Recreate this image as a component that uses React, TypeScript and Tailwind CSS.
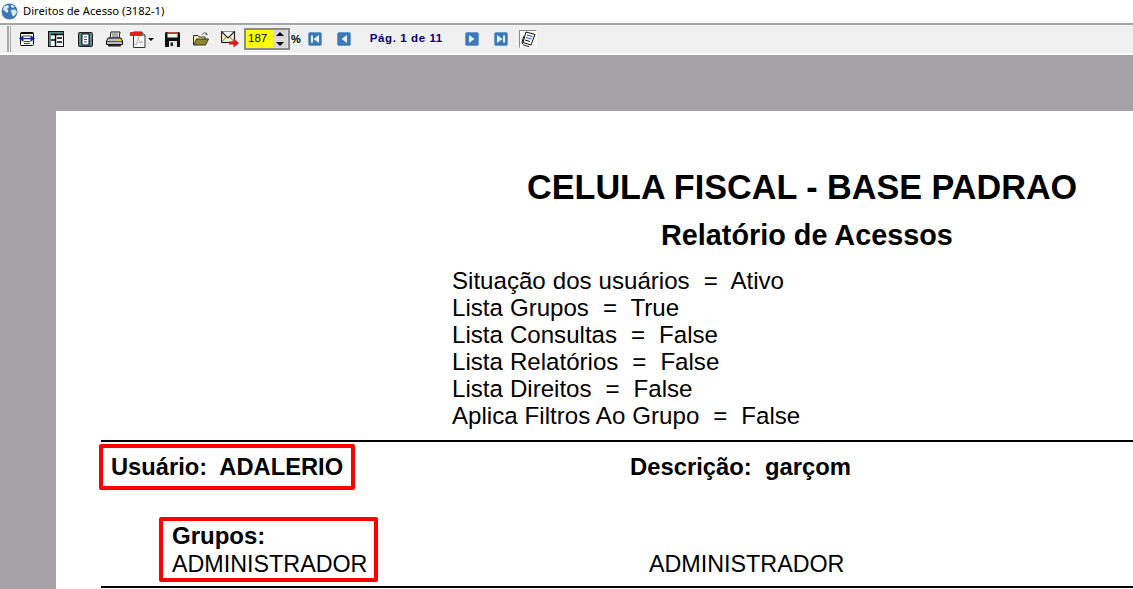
const font = { fontFamily: '"Liberation Sans", Arial, sans-serif' };

function Globe() {
  return (
    <svg width="17" height="17" viewBox="0 0 17 17">
      <circle cx="8.5" cy="8.5" r="8" fill="#3d76b3" />
      <path d="M3 3.5 L7 2 L8 4 L6 6 L7.5 8 L6 10 L4 8 L2 7 Z" fill="#dfe9f3" />
      <path d="M10 1.5 L14 3.5 L12 5 L10 4 Z M9.5 7 L14 6.5 L16 9 L13 13.5 L11 12 L10.5 9.5 Z" fill="#dfe9f3" />
    </svg>
  );
}

function Nav({ kind }: { kind: "first" | "prev" | "next" | "last" }) {
  const flip = kind === "next" || kind === "last";
  const bar = kind === "first" || kind === "last";
  return (
    <svg width="14" height="14" viewBox="0 0 14 14">
      <rect x="0.5" y="0.5" width="13" height="13" rx="1.5" fill="#3b78b5" stroke="#6b9ccb" />
      <g transform={flip ? "translate(14 0) scale(-1 1)" : undefined} fill="#eaf2fa">
        {bar && <rect x="3" y="3.5" width="2" height="7" />}
        {bar ? <path d="M11 3 V11 L5.5 7 Z" /> : <path d="M10 3 V11 L4.5 7 Z" />}
      </g>
    </svg>
  );
}

function FitWidth() {
  return (
    <svg width="16" height="14" viewBox="0 0 16 14">
      <rect x="1.5" y="0.5" width="13" height="13" rx="1" fill="#fff" stroke="#000" />
      <rect x="2" y="0.5" width="12" height="1.5" fill="#000" />
      <path d="M5 4 H11 M5 9.5 H11 M5 11.5 H11" stroke="#444" strokeWidth="1" />
      <path d="M0 6.5 L4.5 3 V10 Z M16 6.5 L11.5 3 V10 Z" fill="#0a2a9c" />
      <rect x="3" y="6" width="10" height="1.2" fill="#0a2a9c" />
    </svg>
  );
}

function TwoPage() {
  return (
    <svg width="16" height="16" viewBox="0 0 16 16">
      <rect x="0" y="0" width="16" height="16" fill="#111" />
      <rect x="1" y="1" width="14" height="14" fill="#4f8c8c" />
      <rect x="3" y="3" width="12" height="12" fill="#fff" />
      <path d="M3 3.5 H15 M7.5 3 V15" stroke="#000" strokeWidth="1.5" fill="none" />
      <path d="M9 7 H14 M9 11 H14 M3 9 H7" stroke="#000" strokeWidth="1.4" />
    </svg>
  );
}

function OnePage() {
  return (
    <svg width="15" height="15" viewBox="0 0 15 15">
      <rect x="0" y="0" width="15" height="15" rx="2" fill="#222" />
      <rect x="1" y="1" width="13" height="13" rx="1" fill="#4f8c8c" />
      <rect x="4" y="2" width="7" height="11" fill="#fff" stroke="#000" />
      <path d="M6 5 H9 M6 7.5 H9 M6 10 H9" stroke="#2a5aa8" />
    </svg>
  );
}

function Printer() {
  return (
    <svg width="17" height="16" viewBox="0 0 17 16">
      <path d="M5 1 H14 L13 7 H4 Z" fill="#fff" stroke="#111" />
      <path d="M6 3 H12 M6 5 H12" stroke="#555" />
      <path d="M2 7 H15 L16.5 10 V13.5 H0.5 V10 Z" fill="#bdbdbd" stroke="#111" />
      <rect x="1" y="10" width="15" height="1" fill="#555" />
      <rect x="11" y="8.5" width="4" height="1.5" fill="#e8d800" />
      <rect x="2" y="13.5" width="13" height="2" rx="0.5" fill="#222" />
    </svg>
  );
}

function Pdf() {
  return (
    <svg width="16" height="17" viewBox="0 0 16 17">
      <path d="M3.5 1 H12 L15 4 V16.5 H3.5 Z" fill="#fff" stroke="#333" />
      <path d="M12 1 V4 H15" fill="#ddd" stroke="#333" />
      <rect x="0" y="1" width="12" height="4" fill="#e2231a" />
      <path d="M5 14.5 C7 11 9 6 8.5 5.5 C8 5 8 8 9.5 10 C10.5 11.5 13.5 11.5 13 11 C12.5 10.5 8 11 5 14.5 Z" fill="none" stroke="#b9b0b0" />
    </svg>
  );
}

function Floppy() {
  return (
    <svg width="15" height="15" viewBox="0 0 15 15">
      <path d="M1 0 H14 L15 1 V15 H0 V1 Z" fill="#111" />
      <rect x="2.5" y="0.5" width="10" height="5" fill="#f4f4f4" />
      <rect x="2.5" y="0.5" width="10" height="1.5" fill="#e2231a" />
      <rect x="4" y="9" width="8" height="6" fill="#e4e4e4" />
      <rect x="5.5" y="10.5" width="2.5" height="3.5" fill="#222" />
    </svg>
  );
}

function Folder() {
  return (
    <svg width="16" height="14" viewBox="0 0 16 14">
      <path d="M9 3 C10 0.5 12 0.5 14 2" fill="none" stroke="#555" strokeWidth="1" />
      <path d="M13 0.5 L15 2.5 L12.5 3 Z" fill="#555" />
      <path d="M0.5 13 V3.5 H5 L6 5 H12 V7" fill="#f7ee9a" stroke="#333" />
      <path d="M0.5 13 L3.5 7 H15.5 L12.5 13 Z" fill="#8c8a28" stroke="#333" />
    </svg>
  );
}

function Mail() {
  return (
    <svg width="18" height="17" viewBox="0 0 18 17">
      <rect x="0.5" y="0.5" width="13" height="11" fill="#fbf3c4" stroke="#222" strokeWidth="1.2" />
      <path d="M0.5 0.5 L7 7 L13.5 0.5" fill="#fff" stroke="#222" strokeWidth="1.2" />
      <path d="M0.5 11.5 L5 6 M13.5 11.5 L9 6" stroke="#777" />
      <path d="M8 10.5 H12.5 V7.5 L18 12 L12.5 16.5 V13.5 H8 Z" fill="#e2161a" />
    </svg>
  );
}

function Notes() {
  return (
    <svg width="18" height="18" viewBox="0 0 18 18">
      <rect x="0" y="0" width="18" height="18" fill="#fbfbfb" />
      <path d="M0.5 17.5 V0.5 H17.5" fill="none" stroke="#8a8a8a" />
      <path d="M7 2 L16 4.5 L12 15 L4 12.5 Z" fill="#fff" stroke="#111" />
      <path d="M8 5 L13.5 6.5 M7 7.5 L12.5 9" stroke="#2a4fc0" />
      <path d="M5 6 L3 12 C3 15 7 16 10 16.5" fill="none" stroke="#111" />
      <path d="M6 10 L11 11.5" stroke="#111" />
    </svg>
  );
}

function Btn({ w, children }: { w: string; children: React.ReactNode }) {
  return <div className={`flex items-center justify-center ${w}`}>{children}</div>;
}

function Toolbar() {
  return (
    <div className="flex h-[32px] items-center border-t-2 border-b-2 border-t-[#a5a5a5] border-b-[#ffffff] bg-[#f0f0f0] pl-[7px] text-black">
      <div className="mr-[8px] flex h-[26px] w-[4px] justify-between">
        <div className="w-[1.5px] bg-[#a9a9a9]" />
        <div className="w-[1.5px] bg-[#a9a9a9]" />
      </div>
      <div className="flex items-center">
        <Btn w="w-[16px]"><FitWidth /></Btn>
        <Btn w="w-[16px] ml-[13px]"><TwoPage /></Btn>
        <Btn w="w-[15px] ml-[14px]"><OnePage /></Btn>
        <Btn w="w-[17px] ml-[13px]"><Printer /></Btn>
        <Btn w="w-[16px] ml-[7px]"><Pdf /></Btn>
        <div className="mr-[11px] ml-[2px] h-0 w-0 border-x-[3px] border-t-[3px] border-x-transparent border-t-black" />
        <Btn w="w-[15px]"><Floppy /></Btn>
        <Btn w="w-[16px] ml-[13px]"><Folder /></Btn>
        <Btn w="w-[18px] ml-[12px]"><Mail /></Btn>
      </div>
      <div className="ml-[5px] flex h-[22px] w-[46px] items-center justify-between border-2 border-[#8a8a8a] bg-[#ffff00] pr-[1px] pl-[2px]">
        <span className="text-[11.5px] leading-none" style={font}>187</span>
        <div className="flex h-[18px] w-[14px] flex-col gap-px">
          <div className="flex flex-1 items-center justify-center bg-[#d8d8d8]"><div className="h-0 w-0 border-x-[4px] border-b-[4px] border-x-transparent border-b-black" /></div>
          <div className="flex flex-1 items-center justify-center bg-[#d8d8d8]"><div className="h-0 w-0 border-x-[4px] border-t-[4px] border-x-transparent border-t-black" /></div>
        </div>
      </div>
      <span className="ml-[1px] text-[11px] font-bold leading-none" style={font}>%</span>
      <div className="ml-[7px] flex items-center">
        <Nav kind="first" />
        <div className="ml-[15px]"><Nav kind="prev" /></div>
      </div>
      <span className="ml-[19px] w-[73px] text-[11.5px] font-bold tracking-[0.6px] whitespace-nowrap text-[#000080]" style={font}>Pág. 1 de 11</span>
      <div className="ml-[22px] flex items-center">
        <Nav kind="next" />
        <div className="ml-[15px]"><Nav kind="last" /></div>
      </div>
      <div className="ml-[11px]"><Notes /></div>
    </div>
  );
}

export default function App() {
  const params = [
    "Situação dos usuários  =  Ativo",
    "Lista Grupos  =  True",
    "Lista Consultas  =  False",
    "Lista Relatórios  =  False",
    "Lista Direitos  =  False",
    "Aplica Filtros Ao Grupo  =  False",
  ];
  return (
    <div className="flex h-[589px] w-[1133px] flex-col overflow-hidden bg-[#a5a3a5]" style={font}>
      <div className="flex h-[23px] shrink-0 items-center gap-[5px] bg-white pl-[1px]">
        <Globe />
        <span className="text-[11.2px] text-black" style={{ fontFamily: '"Noto Sans", sans-serif' }}>Direitos de Acesso (3182-1)</span>
      </div>
      <Toolbar />
      <div className="mt-[56px] ml-[56px] flex-1 bg-white pl-[45px] text-black">
        <div className="ml-[-45px] pt-[56px] pl-[471px] text-[34.2px] leading-[40px] font-bold whitespace-nowrap">CELULA FISCAL - BASE PADRAO</div>
        <div className="mt-[11px] ml-[-45px] pl-[605px] text-[28.8px] leading-[34px] font-bold whitespace-nowrap">Relatório de Acessos</div>
        <div className="mt-[15px] ml-[351px] text-[24.1px] leading-[27px] [word-spacing:0.3px]">
          {params.map((p) => (
            <div key={p} className="whitespace-pre">{p}</div>
          ))}
        </div>
        <div className="mt-[11px] h-[2px] bg-black" />
        <div className="flex h-[48px] items-center">
          <div className="mt-[2px] ml-[-2px] flex h-[46px] w-[256px] items-center rounded-[2px] border-[4px] border-[#ff0000] pt-[2px] pl-[8px] text-[23.7px] font-bold whitespace-pre">Usuário:  ADALERIO</div>
          <div className="mt-[2px] ml-[275px] text-[23.8px] font-bold whitespace-pre">Descrição:  garçom</div>
        </div>
        <div className="mt-[27px] flex">
          <div className="ml-[58px] flex h-[65px] w-[219px] flex-col justify-center rounded-[2px] border-[4px] border-[#ff0000] pt-[1px] pl-[9px] text-[23.3px] leading-[28px]">
            <span className="text-[24px] font-bold">Grupos:</span>
            <span>ADMINISTRADOR</span>
          </div>
          <div className="ml-[271px] self-end pb-[4px] text-[23.3px] leading-[28px]">ADMINISTRADOR</div>
        </div>
        <div className="mt-[4px] h-[2px] bg-black" />
      </div>
    </div>
  );
}
